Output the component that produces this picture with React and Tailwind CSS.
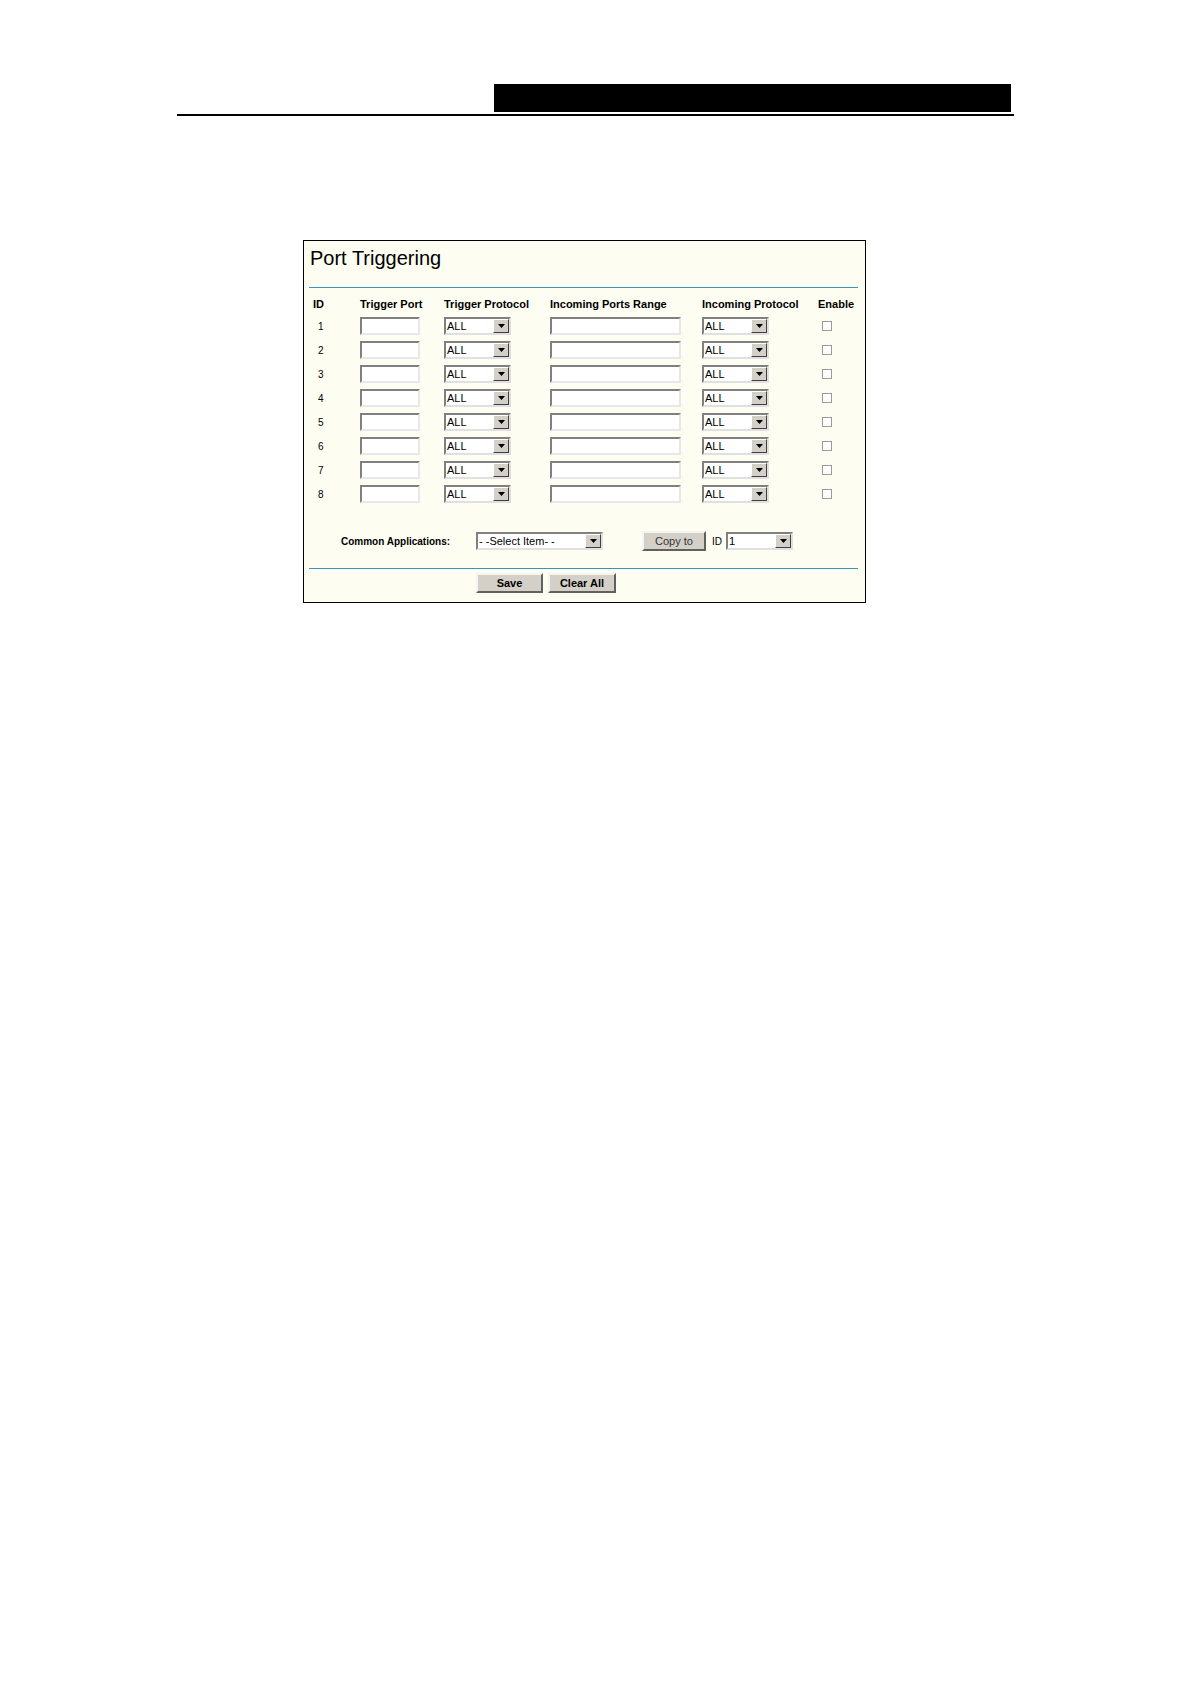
import React from "react";

const rows = [1, 2, 3, 4, 5, 6, 7, 8];

const Arrow = () => (
  <div className="absolute right-0 top-0 bottom-0 w-[16px] bg-[#d4d0c8] border border-t-white border-l-white border-r-[#404040] border-b-[#404040] flex items-center justify-center">
    <svg width="7" height="4" viewBox="0 0 7 4">
      <path d="M0 0h7L3.5 4z" fill="#000" />
    </svg>
  </div>
);

const Select = ({ value, w }) => (
  <div
    className={`relative h-[18px] bg-white border-2 border-t-[#808080] border-l-[#808080] border-r-[#e0e0e0] border-b-[#e0e0e0] ${w}`}
  >
    <span className="absolute left-[1px] top-[1px] text-[11px] leading-[13px] text-black">{value}</span>
    <Arrow />
  </div>
);

const TextBox = ({ w }) => (
  <div
    className={`h-[18px] bg-white border-2 border-t-[#808080] border-l-[#808080] border-r-[#e8e8e8] border-b-[#e8e8e8] ${w}`}
  />
);

const Btn = ({ children, w, bold }) => (
  <div
    className={`h-[20px] ${w} bg-[#d4d0c8] border-2 border-t-[#f4f4f4] border-l-[#f4f4f4] border-r-[#606060] border-b-[#606060] flex items-center justify-center text-[11px] ${bold ? "font-bold text-black" : "text-[#333]"}`}
  >
    {children}
  </div>
);

export default function App() {
  return (
    <div className="min-h-[1684px] w-[1190px] bg-white" style={{ fontFamily: '"Liberation Sans", Arial, sans-serif' }}>
      {/* page header */}
      <div className="pt-[84px] ml-[177px] w-[837px]">
        <div className="flex justify-end pr-[3px]">
          <div className="w-[517px] h-[28px] bg-black" />
        </div>
        <div className="mt-[2px] h-[2px] bg-black" />
      </div>

      {/* panel */}
      <div className="mt-[124px] ml-[303px] w-[563px] h-[363px] border border-black bg-[#fdfdf1] box-border">
        <div className="h-[46px] pl-[6px] pt-[6px]">
          <div className="text-[20px] leading-[23px] text-black">Port Triggering</div>
        </div>
        <div className="ml-[5px] mr-[7px] h-[1px] bg-[#3a93bf]" />

        <div className="mt-[6px] pl-[9px] flex h-[20px] items-center text-[11px] font-bold text-black">
          <div className="w-[47px]">ID</div>
          <div className="w-[84px]">Trigger Port</div>
          <div className="w-[106px]">Trigger Protocol</div>
          <div className="w-[152px]">Incoming Ports Range</div>
          <div className="w-[111px]">Incoming Protocol</div>
          <div className="pl-[5px]">Enable</div>
        </div>

        {rows.map((r) => (
          <div key={r} className="pl-[9px] flex h-[24px] items-center text-[10px] text-black">
            <div className="w-[47px] pl-[5px]">{r}</div>
            <div className="w-[84px]">
              <TextBox w="w-[60px]" />
            </div>
            <div className="w-[106px]">
              <Select value="ALL" w="w-[67px]" />
            </div>
            <div className="w-[152px]">
              <TextBox w="w-[131px]" />
            </div>
            <div className="w-[120px]">
              <Select value="ALL" w="w-[67px]" />
            </div>
            <div className="w-[10px] h-[10px] border border-[#9a9a9a] bg-white" />
          </div>
        ))}

        <div className="mt-[23px] h-[24px] flex items-center text-[11px]">
          <div className="ml-[37px] w-[135px] text-[10px] font-bold text-black">Common Applications:</div>
          <Select value="- -Select Item- -" w="w-[127px]" />
          <div className="ml-[39px]">
            <Btn w="w-[64px]">Copy to</Btn>
          </div>
          <div className="ml-[6px] w-[14px] text-[10px] text-black">ID</div>
          <Select value="1" w="w-[67px]" />
        </div>

        <div className="mt-[15px] ml-[5px] mr-[7px] h-[1px] bg-[#3a93bf]" />

        <div className="mt-[4px] flex gap-[5px] pl-[172px]">
          <Btn w="w-[67px]" bold>
            Save
          </Btn>
          <Btn w="w-[68px]" bold>
            Clear All
          </Btn>
        </div>
      </div>
    </div>
  );
}
